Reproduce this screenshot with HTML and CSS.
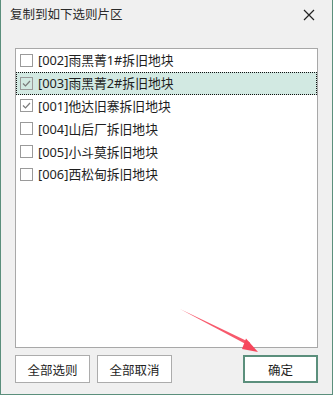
FILE: index.html
```html
<!DOCTYPE html>
<html>
<head>
<meta charset="utf-8">
<link rel="stylesheet" href="styles.css">
</head>
<body>
<div class="dialog">
  <div class="titlebar">
    <span class="title">复制到如下选则片区</span>
    <svg class="close" width="12" height="12" viewBox="0 0 12 12"><path d="M1 1L11 11M11 1L1 11" stroke="#222" stroke-width="1.2" fill="none"/></svg>
  </div>
  <div class="content">
    <div class="listbox">
      <div class="row"><span class="box"></span><span class="label">[002]雨黑菁1#拆旧地块</span></div>
      <div class="row selected"><span class="box checked"><svg width="11" height="11" viewBox="0 0 11 11"><path d="M2 5.5L4.5 8L9 3" stroke="#7a7a7a" stroke-width="1.2" fill="none"/></svg></span><span class="label">[003]雨黑菁2#拆旧地块</span></div>
      <div class="row"><span class="box checked"><svg width="11" height="11" viewBox="0 0 11 11"><path d="M2 5.5L4.5 8L9 3" stroke="#7a7a7a" stroke-width="1.2" fill="none"/></svg></span><span class="label">[001]他达旧寨拆旧地块</span></div>
      <div class="row"><span class="box"></span><span class="label">[004]山后厂拆旧地块</span></div>
      <div class="row"><span class="box"></span><span class="label">[005]小斗莫拆旧地块</span></div>
      <div class="row"><span class="box"></span><span class="label">[006]西松甸拆旧地块</span></div>
    </div>
    <div class="buttons">
      <button class="btn">全部选则</button>
      <button class="btn">全部取消</button>
      <span class="spacer"></span>
      <button class="btn primary">确定</button>
    </div>
  </div>
  <svg class="arrow" width="90" height="50" viewBox="0 0 90 50">
    <polygon points="0,0 70,33.5 68.5,36.5" fill="#f6475c" opacity="0.9"/>
    <polygon points="78,43 66,29.5 62,40" fill="#f6475c"/>
  </svg>
</div>
</body>
</html>
```
FILE: styles.css
```css
html, body {
  margin: 0;
  padding: 0;
  background: #f0f0f0;
}
body {
  font-family: "Noto Sans", "Noto Sans CJK SC", sans-serif;
  color: #1e1e1e;
}
.dialog {
  position: relative;
  width: 333px;
  height: 395px;
  box-sizing: border-box;
  background: #f0f0f0;
  border: 1px solid #5b8f7c;
  border-top: none;
  display: flex;
  flex-direction: column;
}
.titlebar {
  height: 30px;
  display: flex;
  align-items: center;
  justify-content: space-between;
  padding: 0 17px 0 9px;
}
.title {
  font-size: 12.5px;
  line-height: 16px;
  color: #2a2a2a;
}
.close {
  display: block;
}
.content {
  padding: 18px 14px 0 14px;
  display: flex;
  flex-direction: column;
}
.listbox {
  height: 300px;
  box-sizing: border-box;
  background: #fff;
  border: 1px solid #a8a8a8;
  display: flex;
  flex-direction: column;
}
.row {
  height: 22.8px;
  box-sizing: border-box;
  display: flex;
  align-items: center;
  padding-left: 3px;
  border: 1px solid transparent;
}
.row.selected {
  background: #d2e9e2;
  border: 1px dotted #111;
}
.box {
  width: 13px;
  height: 13px;
  box-sizing: border-box;
  border: 1px solid #9a9a9a;
  background: #fff;
  display: flex;
  align-items: center;
  justify-content: center;
}
.row.selected .box {
  background: transparent;
}
.box svg { display: block; }
.label {
  margin-left: 5px;
  font-size: 12.8px;
  line-height: 16px;
  white-space: nowrap;
}
.buttons {
  margin-top: 7px;
  display: flex;
  gap: 7px;
}
.spacer { flex: 1; }
.btn {
  width: 75px;
  height: 28px;
  box-sizing: border-box;
  background: #fff;
  border: 1px solid #acacac;
  font-family: "Noto Sans", "Noto Sans CJK SC", sans-serif;
  font-size: 12.5px;
  color: #1e1e1e;
  padding: 0;
}
.btn.primary {
  border: 2px solid #5b8f7c;
}
.arrow {
  position: absolute;
  left: 179px;
  top: 309px;
}
```
